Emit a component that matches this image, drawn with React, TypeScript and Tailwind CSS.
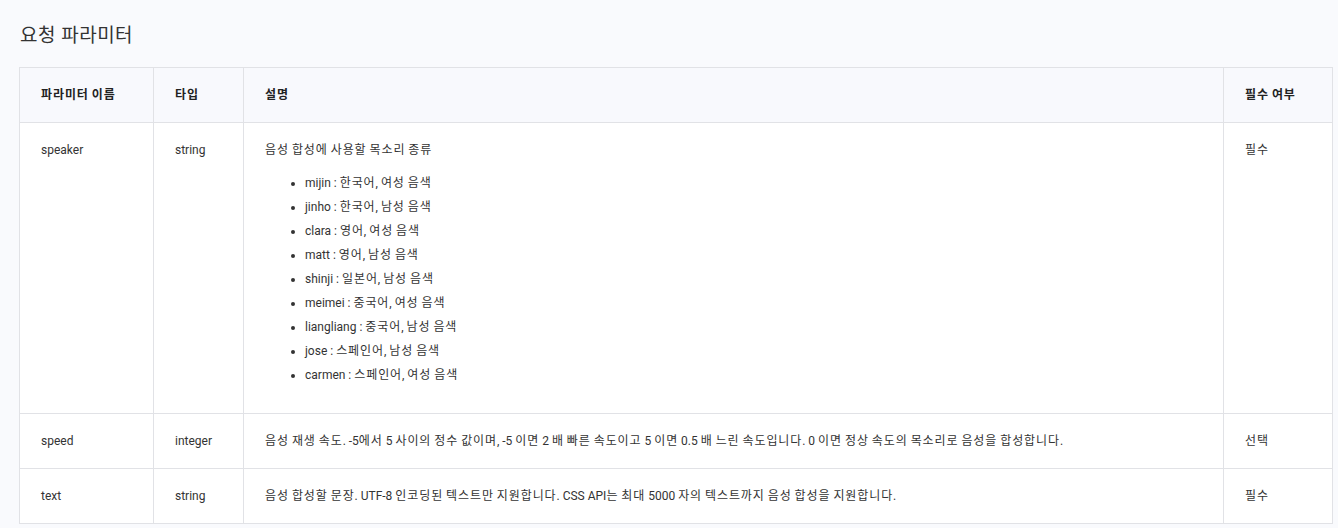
import type { ReactNode } from "react";

const speakers: { name: string; desc: string }[] = [
  { name: "mijin", desc: "한국어, 여성 음색" },
  { name: "jinho", desc: "한국어, 남성 음색" },
  { name: "clara", desc: "영어, 여성 음색" },
  { name: "matt", desc: "영어, 남성 음색" },
  { name: "shinji", desc: "일본어, 남성 음색" },
  { name: "meimei", desc: "중국어, 여성 음색" },
  { name: "liangliang", desc: "중국어, 남성 음색" },
  { name: "jose", desc: "스페인어, 남성 음색" },
  { name: "carmen", desc: "스페인어, 여성 음색" },
];

const cell = "border border-[#e1e2e6] px-[21px] py-5 align-top leading-[14px]";

// hangul in the reference font runs a little wider than Noto's, so space it out
function K({ children }: { children: string }): ReactNode {
  return children.split(/([\uAC00-\uD7A3]+)/).map((part, i) =>
    /[\uAC00-\uD7A3]/.test(part) ? (
      <span key={i} className="tracking-[0.9px]">
        {part}
      </span>
    ) : (
      part
    ),
  );
}

export default function App() {
  return (
    <div
      className="min-h-[528px] bg-[#f9fafd] pl-[19px] pr-[6px] pt-[25px] text-[12px] text-[#333]"
      style={{ fontFamily: 'Roboto, "Noto Sans CJK KR", sans-serif' }}
    >
      <h2 className="mb-[20px] ml-px text-[19px] leading-[22px] font-normal tracking-[0.5px] text-[#333]">
        요청 파라미터
      </h2>
      <table className="w-[1313px] table-fixed border-collapse bg-white">
        <colgroup>
          <col className="w-[134px]" />
          <col className="w-[90px]" />
          <col className="w-[980px]" />
          <col className="w-[109px]" />
        </colgroup>
        <thead>
          <tr className="bg-[#f8f9fd] text-left font-bold text-[#222]">
            <th className={cell}><K>파라미터 이름</K></th>
            <th className={cell}><K>타입</K></th>
            <th className={cell}><K>설명</K></th>
            <th className={cell}><K>필수 여부</K></th>
          </tr>
        </thead>
        <tbody>
          <tr>
            <td className={cell}>speaker</td>
            <td className={cell}>string</td>
            <td className={cell}>
              <p><K>음성 합성에 사용할 목소리 종류</K></p>
              <ul className="mt-[14px] mb-[6px] list-disc pl-10">
                {speakers.map((s) => (
                  <li key={s.name} className="py-[5px]">
                    <K>{`${s.name} : ${s.desc}`}</K>
                  </li>
                ))}
              </ul>
            </td>
            <td className={cell}><K>필수</K></td>
          </tr>
          <tr>
            <td className={cell}>speed</td>
            <td className={cell}>integer</td>
            <td className={cell}>
              <K>
                음성 재생 속도. -5에서 5 사이의 정수 값이며, -5 이면 2 배 빠른 속도이고 5 이면 0.5 배 느린 속도입니다. 0 이면 정상 속도의 목소리로 음성을 합성합니다.
              </K>
            </td>
            <td className={cell}><K>선택</K></td>
          </tr>
          <tr>
            <td className={cell}>text</td>
            <td className={cell}>string</td>
            <td className={cell}>
              <K>
                음성 합성할 문장. UTF-8 인코딩된 텍스트만 지원합니다. CSS API는 최대 5000 자의 텍스트까지 음성 합성을 지원합니다.
              </K>
            </td>
            <td className={cell}><K>필수</K></td>
          </tr>
        </tbody>
      </table>
    </div>
  );
}
